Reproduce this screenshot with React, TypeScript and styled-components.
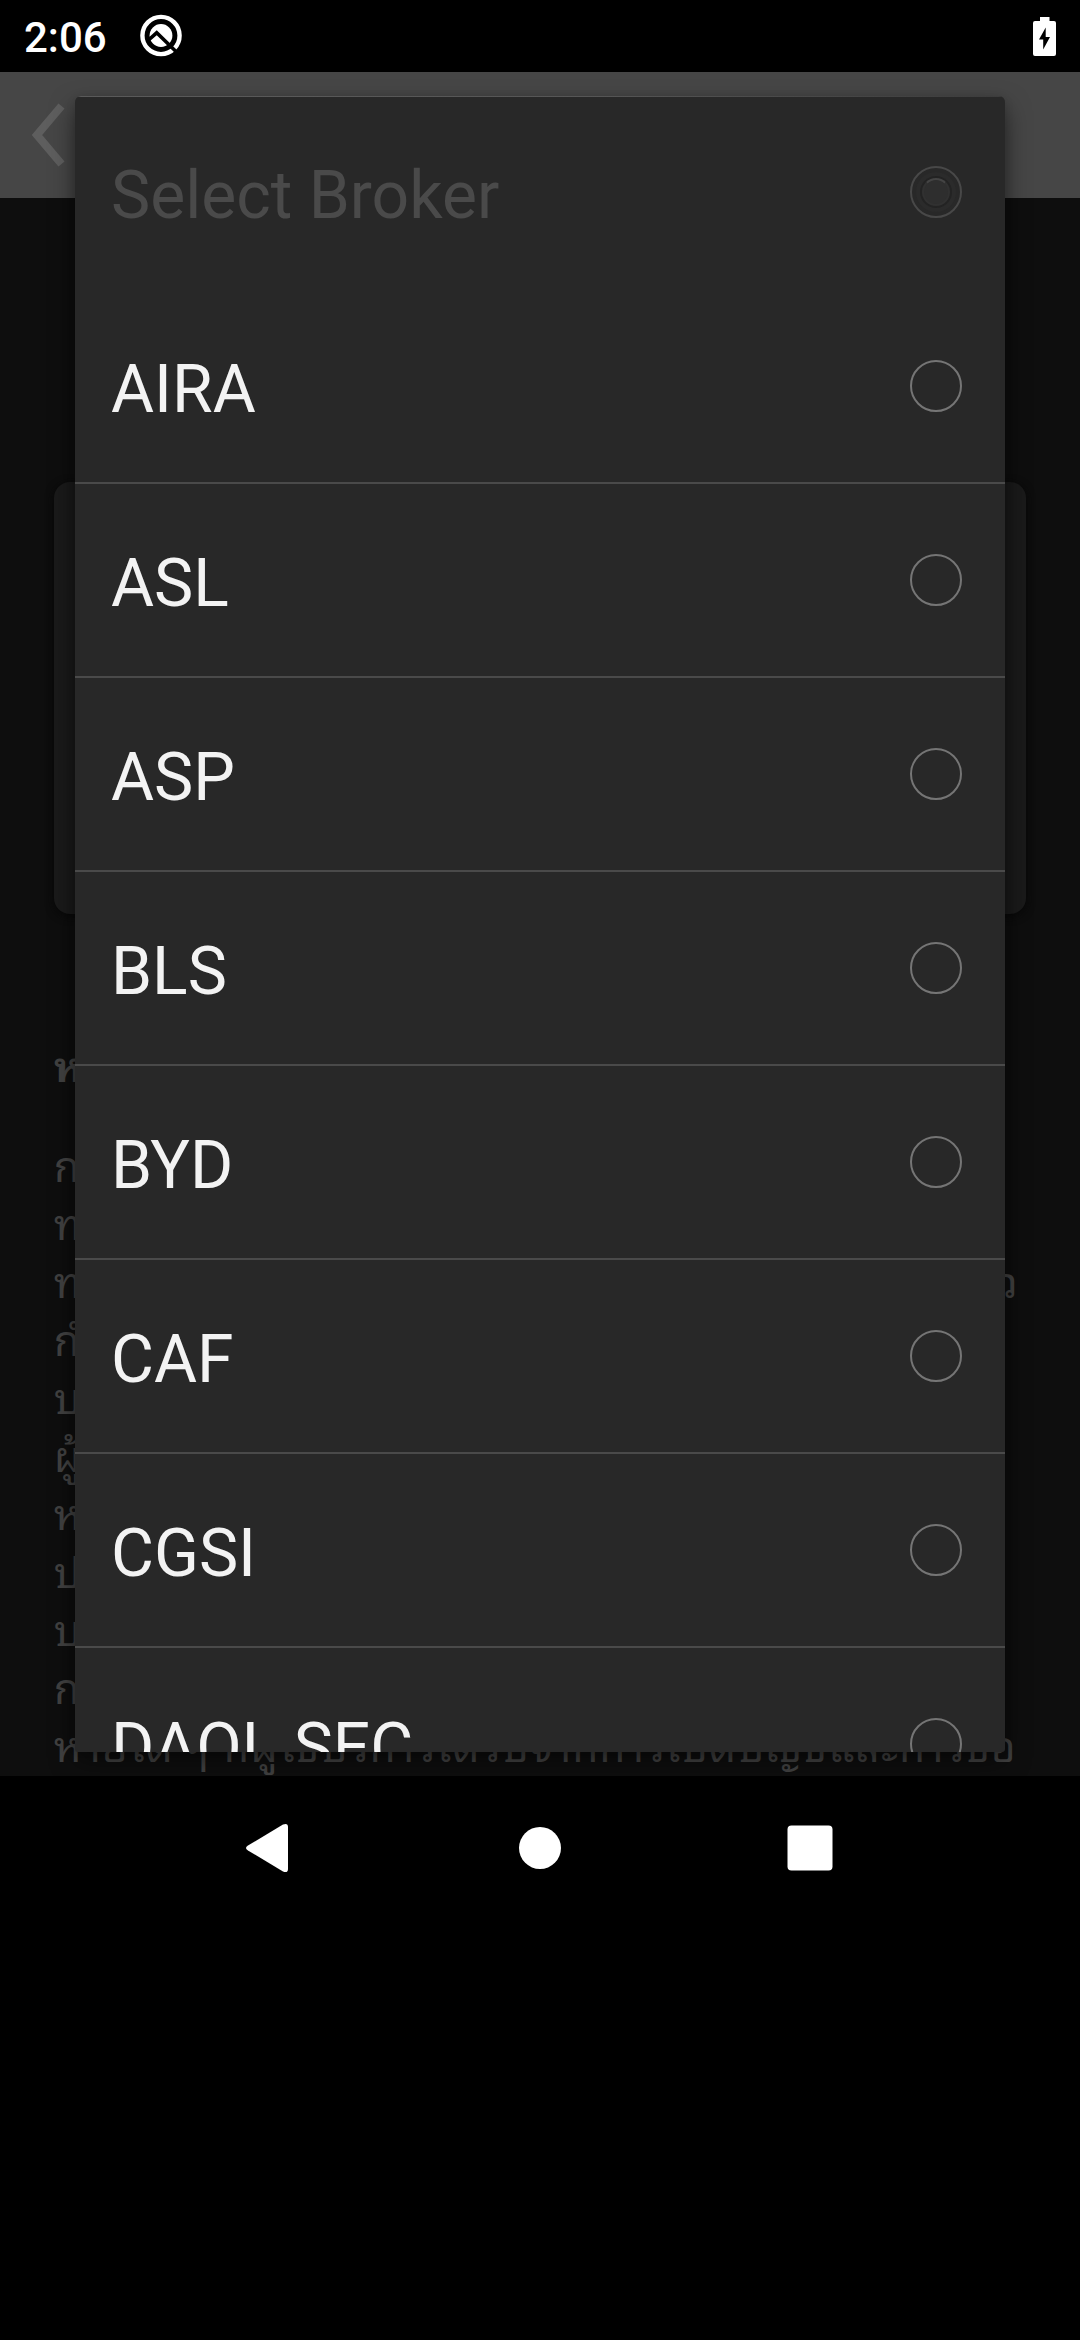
import React from "react";
import styled, { createGlobalStyle } from "styled-components";

const GlobalStyle = createGlobalStyle`
  html, body { margin: 0; background: #000; }
  * { box-sizing: border-box; }
`;

const Screen = styled.div`
  position: relative;
  display: flex;
  flex-direction: column;
  width: 1080px;
  height: 2340px;
  overflow: hidden;
  background: #000;
  font-family: Roboto, "Noto Sans", sans-serif;
`;

const StatusBar = styled.header`
  display: flex;
  align-items: center;
  flex: none;
  height: 72px;
  padding: 0 24px;
`;

const Clock = styled.span`
  width: 115px;
  padding-top: 3px;
  color: #fff;
  font-size: 42px;
  font-weight: 500;
  line-height: 50px;
`;

const StatusIcon = styled.svg`
  display: block;
  flex: none;
`;

const Spacer = styled.div`
  flex: 1;
`;

const Page = styled.main`
  display: flex;
  flex-direction: column;
  flex: none;
  height: 1704px;
  overflow: hidden;
  background: #0e0e0e;
`;

const AppBar = styled.div`
  display: flex;
  flex: none;
  height: 126px;
  padding: 28px 28px;
  background: #464646;
`;

const Card = styled.section`
  flex: none;
  height: 432px;
  margin: 284px 54px 0;
  border-radius: 16px;
  background: #1a1a1a;
  box-shadow: 0 2px 8px #080808;
`;

const Notes = styled.section`
  padding: 125px 54px 0;
  color: #414141;
  font-family: Roboto, "Noto Sans Thai Looped", "Noto Looped Thai", "Noto Serif Thai", Loma, Garuda, Waree, Umpush, Norasi, "Noto Sans", sans-serif;
  font-size: 42px;
  line-height: 58px;
  letter-spacing: 1.25px;
`;

const NotesTitle = styled.h2`
  height: 58px;
  margin: 0 0 42px;
  font-size: 42px;
  font-weight: 700;
  line-height: 58px;
`;

const NotesLine = styled.div<{ $wide?: boolean }>`
  display: flex;
  justify-content: ${(p) => (p.$wide ? "space-between" : "flex-start")};
  width: 965px;
  height: 58px;
  white-space: nowrap;
`;

const Dialog = styled.div`
  position: absolute;
  top: 96px;
  left: 75px;
  width: 930px;
  height: 1656px;
  overflow: hidden;
  border-radius: 6px 6px 3px 3px;
  background: #282828;
`;

const DialogShade = styled.div`
  position: absolute;
  top: 98px;
  left: 75px;
  width: 930px;
  height: 1652px;
  border-radius: 6px;
  box-shadow: 0 10px 24px rgba(0, 0, 0, 0.5), 0 0 10px rgba(0, 0, 0, 0.12);
`;

const TopEdge = styled.div`
  position: absolute;
  top: 0;
  left: 3px;
  right: 3px;
  height: 1px;
  background: linear-gradient(90deg, #5a5a5a 0%, #565656 55%, #3c3c3c 100%);
`;

const Option = styled.div<{ $disabled?: boolean }>`
  display: flex;
  align-items: center;
  justify-content: space-between;
  height: 194px;
  padding: 0 43px 0 36px;
  border-bottom: 2px solid ${(p) => (p.$disabled ? "transparent" : "#4a4a4a")};
  color: ${(p) => (p.$disabled ? "#4a4a4a" : "#f3f3f3")};
`;

const Label = styled.span`
  padding-top: 7px;
  font-size: 66px;
  line-height: 78px;
  white-space: nowrap;
`;

const Radio = styled.span<{ $disabled?: boolean }>`
  display: flex;
  align-items: center;
  justify-content: center;
  width: 52px;
  height: 52px;
  border: 2px solid ${(p) => (p.$disabled ? "#484848" : "#757575")};
  border-radius: 50%;
`;

const Dot = styled.span`
  width: 28px;
  height: 28px;
  border: 2px solid #313131;
  border-top-color: #444;
  border-radius: 50%;
  background: #2e2e2e;
  box-shadow: 0 0 0 2px #232323, 0 0 0 6px #2b2b2b;
`;

const NavBar = styled.nav`
  display: flex;
  align-items: center;
  justify-content: space-around;
  flex: none;
  height: 144px;
  padding: 0 135px;
`;

const NavIcon = styled.svg`
  display: block;
  width: 60px;
  height: 60px;
  fill: #fff;
`;

const brokers = ["AIRA", "ASL", "ASP", "BLS", "BYD", "CAF", "CGSI", "DAOL SEC"];

const notes: string[][] = [
  ["การ"],
  ["ทาง"],
  ["ทาง", "แล้ว"],
  ["กำหนด"],
  ["บริการ"],
  ["ผู้ใช้"],
  ["หาก"],
  ["ประกอบ"],
  ["บริษัท"],
  ["การ"],
  ["หายใด ๆ ที่ผู้ใช้บริการได้รับจากการเปิดบัญชีและการซื้อ"],
];

export default function App() {
  return (
    <Screen>
      <GlobalStyle />
      <StatusBar>
        <Clock>2:06</Clock>
        <StatusIcon width="44" height="44" viewBox="0 0 44 44">
          <circle cx="22" cy="21.500" r="18.600" fill="none" stroke="#fff" strokeWidth="4.400" />
          <circle cx="22" cy="21.500" r="11.400" fill="#fff" />
          <path d="M9 26.500 L17.700 18.800 L37 37.500" fill="none" stroke="#000" strokeWidth="3.600" />
        </StatusIcon>
        <Spacer />
        <StatusIcon width="23" height="39" viewBox="0 0 23 39">
          <path
            d="M7 0h9.500v4H21a2 2 0 0 1 2 2v31a2 2 0 0 1-2 2H2a2 2 0 0 1-2-2V6a2 2 0 0 1 2-2h5z"
            fill="#fff"
          />
          <path d="M12.700 10.500 L6 22.500 H10.200 V32.500 L17 20 H12.700z" fill="#000" />
        </StatusIcon>
      </StatusBar>
      <Page>
        <AppBar>
          <StatusIcon width="40" height="70" viewBox="0 0 40 70">
            <path d="M33.500 6 L9 35 L33.500 64" fill="none" stroke="#5e5e5e" strokeWidth="8" />
          </StatusIcon>
        </AppBar>
        <Card />
        <Notes>
          <NotesTitle>หมายเหตุ</NotesTitle>
          {notes.map((parts, i) => (
            <NotesLine key={i} $wide={parts.length > 1}>
              {parts.map((part) => (
                <span key={part}>{part}</span>
              ))}
            </NotesLine>
          ))}
        </Notes>
      </Page>
      <NavBar>
        <NavIcon viewBox="0 0 60 60">
          <path d="M8 27.500 L43 6.500 Q48 4.500 48 9 V51 Q48 55.500 43 53.500 L8 32.500 Q4 30 8 27.500z" />
        </NavIcon>
        <NavIcon viewBox="0 0 60 60">
          <circle cx="30" cy="30" r="21" />
        </NavIcon>
        <NavIcon viewBox="0 0 60 60">
          <rect x="7.500" y="7.500" width="45" height="45" rx="4" />
        </NavIcon>
      </NavBar>
      <DialogShade />
      <Dialog>
        <Option $disabled>
          <Label>Select Broker</Label>
          <Radio $disabled>
            <Dot />
          </Radio>
        </Option>
        {brokers.map((name) => (
          <Option key={name}>
            <Label>{name}</Label>
            <Radio />
          </Option>
        ))}
        <TopEdge />
      </Dialog>
    </Screen>
  );
}
